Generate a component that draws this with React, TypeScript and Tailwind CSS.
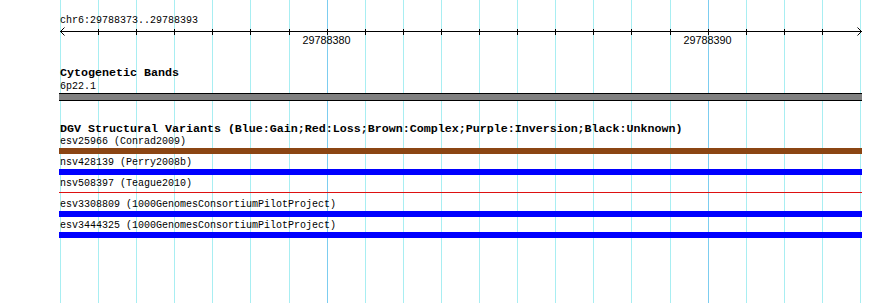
import React from "react";

// Ruler covers bases 29788373..29788394 over pixels 60..860
const START = 29788373;
const END = 29788394;
const X0 = 60;
const X1 = 860;
const bp = (X1 - X0) / (END - START);
const xOf = (pos: number) => Math.round(X0 + (pos - START) * bp);

const POSITIONS = Array.from({ length: END - START + 1 }, (_, i) => START + i);

const VARIANTS = [
  { id: "esv25966", study: "Conrad2009", kind: "brown" },
  { id: "nsv428139", study: "Perry2008b", kind: "blue" },
  { id: "nsv508397", study: "Teague2010", kind: "red" },
  { id: "esv3308809", study: "1000GenomesConsortiumPilotProject", kind: "blue" },
  { id: "esv3444325", study: "1000GenomesConsortiumPilotProject", kind: "blue" },
];

const mono = "font-['Liberation_Mono','DejaVu_Sans_Mono',monospace]";

function Ruler() {
  return (
    <svg width={890} height={20} className="block" style={{ marginLeft: -60 }}>
      <line x1={60} y1={4.5} x2={862} y2={4.5} stroke="#000" strokeWidth={1} />
      {POSITIONS.slice(1, -1).map((p) => (
        <line key={p} x1={xOf(p) + 0.5} y1={2} x2={xOf(p) + 0.5} y2={8} stroke="#000" strokeWidth={1} />
      ))}
      <polyline points="64.5,0.5 60.5,4.5 64.5,8.5" fill="none" stroke="#000" strokeWidth={1} />
      <polyline points="857.5,0.5 861.5,4.5 857.5,8.5" fill="none" stroke="#000" strokeWidth={1} />
      {[29788380, 29788390].map((p) => (
        <text
          key={p}
          x={xOf(p) - 0.5}
          y={17}
          textAnchor="middle"
          fontFamily="'Liberation Sans', Arial, sans-serif"
          fontSize={10.8}
          fill="#000"
        >
          {p}
        </text>
      ))}
    </svg>
  );
}

function VariantRow({ v }: { v: (typeof VARIANTS)[number] }) {
  return (
    <div className="h-[21px] flex flex-col">
      <div className={`${mono} text-[10px] leading-[12px] h-[12px] text-black whitespace-pre`}>
        {v.id} ({v.study})
      </div>
      {v.kind === "red" ? (
        <div className="-ml-px w-[803px] h-[6px] flex flex-col justify-start pt-[2px]">
          <div className="h-px bg-[#dd1111]" />
        </div>
      ) : (
        <div className={`-ml-px w-[803px] h-[6px] ${v.kind === "brown" ? "bg-[#8b4513]" : "bg-[#0000ff]"}`} />
      )}
    </div>
  );
}

export default function App() {
  return (
    <div className="relative w-[890px] h-[303px] bg-white overflow-hidden">
      {/* grid lines, one per base */}
      {POSITIONS.map((p) => (
        <div
          key={p}
          className={`absolute top-0 bottom-0 w-px ${p % 10 === 0 ? "bg-[#7ccdf0]" : "bg-[#a8eef2]"}`}
          style={{ left: xOf(p) }}
        />
      ))}

      <div className="relative pl-[60px] pt-[14px] text-black">
        <div className={`${mono} text-[10px] leading-[13px] h-[13px]`}>chr6:29788373..29788393</div>
        <Ruler />

        <div className="mt-[20px]">
          <div className={`${mono} text-[11.67px] font-bold leading-[13px] h-[13px]`}>Cytogenetic Bands</div>
          <div className={`${mono} text-[10px] leading-[13px] h-[13px]`}>6p22.1</div>
          <div className="-ml-px w-[803px] h-[8px] bg-[#808080] border-y border-black" />
        </div>

        <div className="mt-[21px]">
          <div className={`${mono} text-[11.67px] font-bold leading-[14px] h-[14px] whitespace-pre`}>
            DGV Structural Variants (Blue:Gain;Red:Loss;Brown:Complex;Purple:Inversion;Black:Unknown)
          </div>
          {VARIANTS.map((v) => (
            <VariantRow key={v.id} v={v} />
          ))}
        </div>
      </div>
    </div>
  );
}
